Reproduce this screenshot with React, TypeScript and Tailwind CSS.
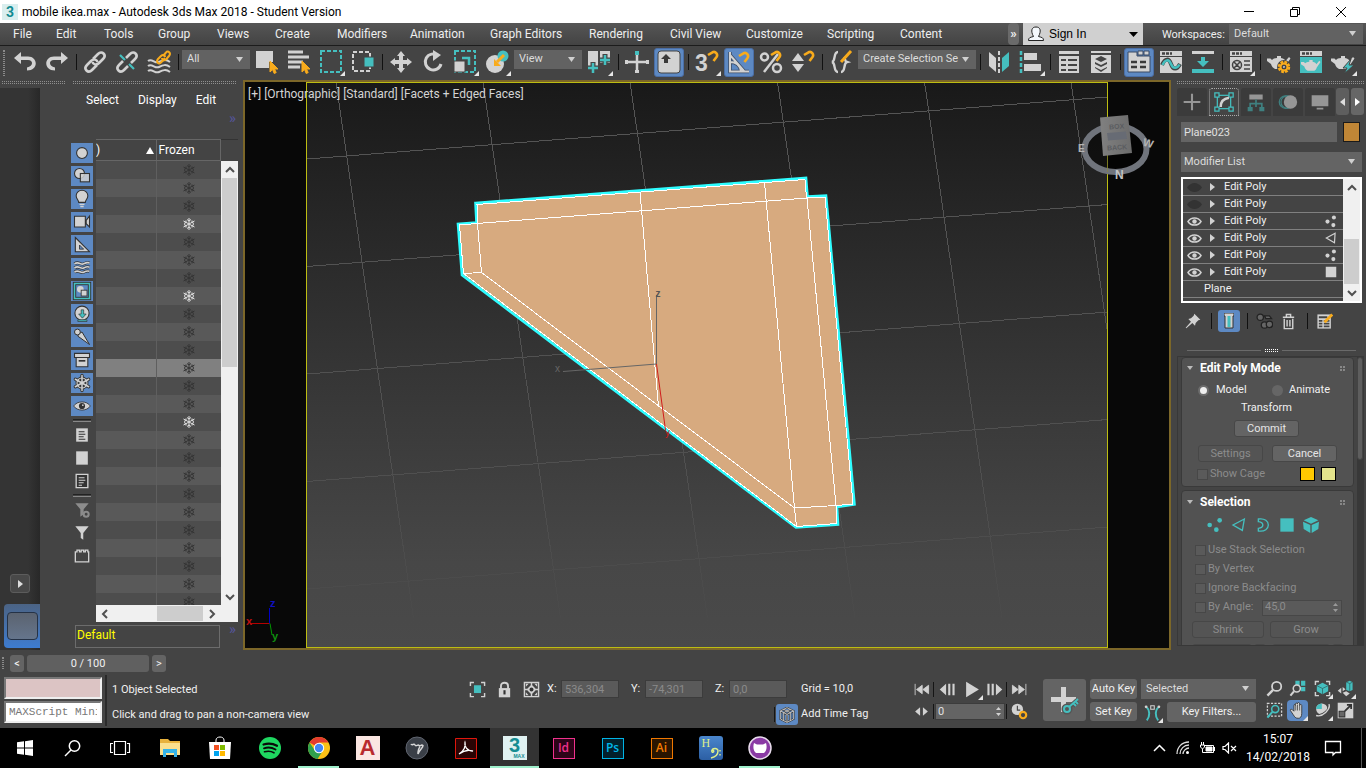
import React from "react";

const L = "#d2d2d2";
const T = "#45bfbf";
const O = "#f8ab1c";

type Kids = { children?: React.ReactNode };

function Ico({ children, s = 24, className = "" }: Kids & { s?: number; className?: string }) {
  return (
    <svg width={s} height={s} viewBox="0 0 24 24" fill="none" className={"shrink-0 " + className} aria-hidden="true">
      {children}
    </svg>
  );
}

function Corner() {
  return (
    <svg width="5" height="5" viewBox="0 0 5 5" className="absolute bottom-0 right-0" aria-hidden="true">
      <path d="M5 0V5H0Z" fill="#e6e6e6" />
    </svg>
  );
}

function Tool({ label, children, fly, on }: Kids & { label: string; fly?: boolean; on?: boolean }) {
  return (
    <button aria-label={label} className="flex h-8 w-8 shrink-0 items-center justify-center">
      <span
        className={
          on
            ? "relative flex h-[29px] w-[30px] items-center justify-center rounded-[3px] border border-[#4a6ea6] bg-[#5d89c3]"
            : "relative flex h-7 w-7 items-center justify-center"
        }
      >
        {children}
        {fly && <Corner />}
      </span>
    </button>
  );
}

const Sep = () => (
  <span className="flex h-8 w-1.5 shrink-0 items-center justify-center">
    <span className="h-4 w-px bg-[#111]" />
  </span>
);

function Drop({ label, value, className = "" }: { label: string; value: string; className?: string }) {
  return (
    <span className={"relative block shrink-0 bg-[#626262] " + className}>
      <select
        aria-label={label}
        className="block h-full w-full appearance-none overflow-hidden bg-transparent pl-[5px] pr-3 text-[11px] text-[#dcdcdc] outline-none"
      >
        <option>{value}</option>
      </select>
      <svg width="7" height="5" viewBox="0 0 7 5" className="pointer-events-none absolute right-[7px] top-1/2 -mt-[3px]" aria-hidden="true">
        <path d="M0 0H7L3.5 5Z" fill="#cfcfcf" />
      </svg>
    </span>
  );
}

const Magnet = ({ x = 12, y = 0 }: { x?: number; y?: number }) => (
  <g transform={`translate(${x} ${y})`} stroke={O} strokeWidth="2.6" fill="none">
    <path d="M0 5L4.500 2.300A3.200 3.200 0 0 1 8.500 7L5.500 11" />
  </g>
);

const Pointer = () => <path d="M15 11V22L17.600 19.600L19.200 23.500L21.200 22.600L19.500 19H23Z" fill={O} stroke={O} />;

const Teapot = () => (
  <path
    d="M10 6h4v2c3 .5 4 1.500 4.500 3L22 7l1.500 1.500L19 15c-.5 2-1.500 3-3 4H8c-2-1-3.500-3-4-5L0 11V8.500h3.500L5 10c1-1.300 2.500-1.800 5-2z"
    fill={L}
  />
);

const menus = ["File", "Edit", "Tools", "Group", "Views", "Create", "Modifiers", "Animation", "Graph Editors", "Rendering", "Civil View", "Customize", "Scripting", "Content"];

function TitleBar() {
  return (
    <header className="flex h-[23px] shrink-0 items-center bg-white text-black">
      <span className="ml-0.5 mr-1 flex h-4 w-4 items-center justify-center bg-[#d9eeee] text-[14px] font-bold leading-4 text-[#128a90]">3</span>
      <h1 className="text-[12px]">mobile ikea.max - Autodesk 3ds Max 2018 - Student Version</h1>
      <div className="ml-auto flex pr-0.5">
        <button aria-label="Minimize" className="flex h-5 w-[46px] items-center justify-center">
          <svg width="12" height="12" stroke="#000"><path d="M1 5.500H11" /></svg>
        </button>
        <button aria-label="Restore" className="flex h-5 w-[46px] items-center justify-center">
          <svg width="12" height="12" stroke="#000" fill="none"><path d="M1.500 3.500H8.500V10.500H1.500ZM3.500 3.500V1.500H10.500V8.500H8.500" /></svg>
        </button>
        <button aria-label="Close" className="flex h-5 w-[46px] items-center justify-center">
          <svg width="12" height="12" stroke="#000"><path d="M1 1L11 11M11 1L1 11" /></svg>
        </button>
      </div>
    </header>
  );
}

function MenuBar() {
  return (
    <div className="flex h-[23px] shrink-0 border-b border-[#1c1c1c] bg-gradient-to-b from-[#565656] to-[#434343] text-[12px] text-[#eeeeee]">
      <nav className="grid grid-cols-[43px_48px_54px_59px_58px_62px_73px_80px_99px_81px_76px_81px_73px_auto] items-center pl-[13px]">
        {menus.map((m) => (
          <button key={m} className="whitespace-nowrap text-left leading-[22px]">{m}</button>
        ))}
      </nav>
      <div className="ml-auto flex pr-[3px]">
        <button aria-label="More menus" className="mr-1 w-[11px] rounded bg-[#6a6a6a] text-[13px] font-bold leading-[18px]">»</button>
        <button className="mr-[19px] flex w-[120px] items-center bg-[#d0d0d0] font-['Liberation_Sans',sans-serif] text-[12px] text-black">
          <svg width="18" height="18" viewBox="0 0 18 18" className="ml-1 mr-1" fill="#f4f8fc" stroke="#222" aria-hidden="true">
            <path d="M1.500 15.500C1.500 12.500 3 12.500 6.500 11.500C3.500 6 4.500 2 9 2S14.500 6 11.500 11.500C15 12.500 16.500 12.500 16.500 15.500Z" />
          </svg>
          Sign In
          <svg width="9" height="5" className="ml-auto mr-[5px]" aria-hidden="true"><path d="M0 0H9L4.500 5Z" /></svg>
        </button>
        <span className="mr-[5px] w-[62px] whitespace-nowrap text-right text-[11px] leading-[23px]">Workspaces:</span>
        <Drop label="Workspaces" value="Default" className="mt-px h-5 w-[134px]" />
      </div>
    </div>
  );
}

function Toolbar() {
  return (
    <div className="flex h-[34px] shrink-0 overflow-hidden bg-[#444444]">
      <span className="my-1 ml-[3px] mr-1 w-0.5 shrink-0 border-x border-dotted border-[#8a8a8a]" />
      <Tool label="Undo"><Ico><path d="M8 2L1 8L8 14V10H15C21 10 20 17 14 17.500V20.500C26 20.500 25 6.500 15 6.500H8Z" fill={L} /></Ico></Tool>
      <Tool label="Redo"><Ico><path d="M16 2L23 8L16 14V10H9C3 10 4 17 10 17.500V20.500C-2 20.500 -1 6.500 9 6.500H16Z" fill={L} /></Ico></Tool>
      <Sep />
      <Tool label="Link">
        <Ico><g stroke={L} strokeWidth="2.600"><path d="M10 9L15 4C19 0 24 5 20 9L16 13C13 16 10 14 9.500 12" /><path d="M14 15L9 20C5 24 0 19 4 15L8 11C11 8 14 10 14.500 12" /></g></Ico>
      </Tool>
      <Tool label="Unlink">
        <Ico><g stroke={L} strokeWidth="2.600"><path d="M11 8L15 4C19 0 24 5 20 9L16 13" /><path d="M13 16L9 20C5 24 0 19 4 15L8 11" /></g><path d="M5 5L10 10M14 14L19 19" stroke={T} strokeWidth="2.200" /></Ico>
      </Tool>
      <Tool label="Bind to space warp">
        <Ico>
          <g stroke={L} strokeWidth="2"><path d="M1 11C5 8 8 14 12 12S19 9 23 12M1 16C5 13 8 19 12 17S19 14 23 17M1 21C5 18 8 24 12 22S19 19 23 22" /></g>
          <g stroke={O} strokeWidth="2"><path d="M16 6L19 2.500C21 0 24.500 3 22 6L19 9.500C17 11 15 10 15 8" /><path d="M18 8L14 12.500C12 15 8.500 12 11 9L14 6C16 4 18 5 18 7" /></g>
        </Ico>
      </Tool>
      <Sep />
      <Drop label="Selection filter" value="All" className="ml-px mr-px mt-1 h-[19px] w-[68px]" />
      <Tool label="Select object"><Ico><path d="M1 1H18V12H14V18H1Z" fill={L} /><Pointer /></Ico></Tool>
      <Tool label="Select by name"><Ico><path d="M1 2H16M1 7H22M1 12H16M1 17H13" stroke={L} strokeWidth="3" /><Pointer /></Ico></Tool>
      <Tool label="Selection region" fly><Ico><rect x="2" y="1" width="20" height="21" stroke={T} strokeWidth="2" strokeDasharray="4 2" /></Ico></Tool>
      <Tool label="Window crossing"><Ico><rect x="2" y="2" width="17" height="19" stroke={L} strokeWidth="2" strokeDasharray="4 2" /><rect x="13" y="7" width="10" height="10" fill={T} stroke="#444" /></Ico></Tool>
      <Sep />
      <Tool label="Move"><Ico><path d="M12 1L16 6H14V10H18V8L23 12L18 16V14H14V18H16L12 23L8 18H10V14H6V16L1 12L6 8V10H10V6H8Z" fill={L} /></Ico></Tool>
      <Tool label="Rotate"><Ico><path d="M17 5.500A8 8 0 1 0 20 14" stroke={L} strokeWidth="3" /><path d="M12 0V11L20 5Z" fill={L} /></Ico></Tool>
      <Tool label="Scale" fly><Ico><rect x="2" y="1" width="20" height="21" stroke={T} strokeWidth="2" strokeDasharray="4 2" /><rect x="1" y="11" width="11" height="11" fill={L} stroke="#444" /><path d="M9 8H16V15" stroke={T} strokeWidth="2.500" /></Ico></Tool>
      <Tool label="Place" fly><Ico><circle cx="10" cy="14" r="9" fill={L} /><circle cx="18" cy="6" r="5.500" fill={T} /><path d="M19 5L12 12" stroke={O} strokeWidth="3" /><path d="M9 16V9L16 16Z" fill={O} /></Ico></Tool>
      <Drop label="Reference coordinate system" value="View" className="ml-px mr-px mt-1 h-[19px] w-[68px]" />
      <Tool label="Pivot center" fly><Ico><path d="M1 1H11V16H1ZM13 1H23V13H13Z" fill={L} /><path d="M6 12V24M1 18H12M18 4V17M12 10H24" stroke="#444" strokeWidth="5" /><path d="M6 13V23M1 18H11M18 5V15M13 10H23" stroke={T} strokeWidth="2.500" /></Ico></Tool>
      <Sep />
      <Tool label="Manipulate"><Ico><path d="M12 5V23M1 12H23" stroke={L} strokeWidth="2.500" /><path d="M10 1H14V5H10Z" fill={T} /><path d="M0 10H3V14H0ZM21 10H24V14H21ZM10 20H14V23H10Z" fill={L} /></Ico></Tool>
      <Tool label="Keyboard shortcut override" on><Ico><rect x="1" y="1" width="22" height="22" rx="3" fill={L} stroke="#444" /><path d="M9 4L14 9H11V13H7V9H4Z" fill="#3a3a3a" /></Ico></Tool>
      <Sep />
      <Tool label="3D snap" fly><span className="absolute left-0.5 top-0.5 font-['Liberation_Sans'] text-[23px] font-bold leading-[26px] text-[#d2d2d2]">3</span><Ico><Magnet x={13} /></Ico></Tool>
      <Tool label="Angle snap" on><Ico><path d="M3 2V21.500H22M3 12C10 12 13 16 14 21M3 5L17 21" stroke="#3c4c66" strokeWidth="3.500" /><path d="M3 2V21.500H22M3 12C10 12 13 16 14 21M3 5L17 21" stroke={L} strokeWidth="2" /><Magnet x={12} y={1} /></Ico></Tool>
      <Tool label="Percent snap"><Ico><circle cx="5.500" cy="7" r="3.500" stroke={L} strokeWidth="2.500" /><circle cx="18" cy="18" r="4" stroke={L} strokeWidth="2.500" /><path d="M19 4L5 22" stroke={L} strokeWidth="2.500" /><Magnet x={12} /></Ico></Tool>
      <Tool label="Spinner snap"><Ico><path d="M7 3L13 11H1ZM7 22L13 14H1Z" fill={L} /><Magnet x={13} /></Ico></Tool>
      <Sep />
      <Tool label="Edit named selection sets"><Ico><path d="M9 2C4 2 7 11 3 12C7 13 4 22 9 22M12 22C17 22 14 13 18 12C15 11 17 9 15 7" stroke={L} strokeWidth="2.400" /><path d="M22 1L12 12" stroke={O} strokeWidth="3" /></Ico></Tool>
      <Drop label="Named selection sets" value="Create Selection Se" className="ml-px mr-px mt-1 h-[19px] w-[118px]" />
      <Sep />
      <Tool label="Mirror"><Ico><path d="M2 2L9 8V22L2 16Z" fill={L} /><path d="M12 1V23" stroke={L} strokeWidth="2" strokeDasharray="4 2" /><path d="M22 2L15 8V22L22 16Z" fill={T} /></Ico></Tool>
      <Tool label="Align" fly><Ico><path d="M2 1V23" stroke={T} strokeWidth="2.500" strokeDasharray="4 2" /><path d="M5 3H18V10H5ZM5 14H22V21H5Z" fill={L} /></Ico></Tool>
      <Sep />
      <Tool label="Scene explorer"><Ico><rect x="2" y="1" width="20" height="22" fill={L} /><path d="M2 5H22" stroke="#444" strokeWidth="2" /><path d="M4 10H9M11 10H20M4 15H9M11 15H20M4 20H9M11 20H20" stroke="#444" strokeWidth="2" /></Ico></Tool>
      <Tool label="Layer explorer"><Ico><rect x="2" y="1" width="20" height="22" fill={L} /><path d="M2 4H22" stroke="#444" strokeWidth="2" /><path d="M12 6L18 9L12 12L6 9ZM6 12L12 15L18 12V14L12 17L6 14ZM6 17L12 20L18 17V18L12 22L6 18Z" fill="#444" /></Ico></Tool>
      <Sep />
      <Tool label="Ribbon" on><Ico><path d="M1 2H10V6H23V22H1Z" fill={L} stroke="#3a4a64" /><path d="M11 1H16V5H11ZM17 1H22V5H17Z" fill={L} stroke="#3a4a64" /><path d="M4 12H10M13 12H19M4 17H10M13 17H19" stroke="#3a3a3a" strokeWidth="2.500" /></Ico></Tool>
      <Tool label="Curve editor"><Ico><path d="M1 1H23V6H1ZM1 7H23V23H1Z" fill={L} /><path d="M3 3.500H13" stroke="#444" strokeWidth="2.500" strokeDasharray="3 1" /><path d="M3 15C6 8 10 8 12 14S18 20 21 14" stroke="#444" strokeWidth="4" /><path d="M3.500 15C6 9 10 9 12 14S18 19 20.500 14.500" stroke={T} strokeWidth="2.500" /></Ico></Tool>
      <Tool label="Schematic view"><Ico><path d="M1 1H23V4H1Z" fill={L} /><path d="M10 7H14V11H18L12 17L6 11H10ZM1 19H23V23H1Z" fill={T} /></Ico></Tool>
      <Sep />
      <Tool label="Material editor" fly><Ico><path d="M1 1H23V6H1ZM1 7H23V22H1Z" fill={L} /><path d="M3 3.500H13" stroke="#444" strokeWidth="2.500" strokeDasharray="3 1" /><circle cx="8" cy="15" r="4.500" stroke="#444" strokeWidth="1.500" /><path d="M5 12L11 18M11 12L5 18M15 11H21M15 15H21M15 19H21" stroke="#444" strokeWidth="1.500" /></Ico></Tool>
      <Sep />
      <Tool label="Render setup"><Ico><Teapot /><circle cx="17" cy="17" r="4" stroke="#444" strokeWidth="6" /><circle cx="17" cy="17" r="4.500" stroke={O} strokeWidth="3.500" strokeDasharray="2.400 1.100" /><circle cx="17" cy="17" r="3.500" stroke={O} strokeWidth="2" /></Ico></Tool>
      <Tool label="Rendered frame window"><Ico><path d="M1 1H23V6H1Z" fill={L} /><path d="M3 3.500H13" stroke="#444" strokeWidth="2.500" strokeDasharray="3 1" /><path d="M1 7H23V23H1Z" fill={T} /><g transform="translate(2 5) scale(.83)"><Teapot /></g></Ico></Tool>
      <Tool label="Render production" fly><Ico><Teapot /><path d="M20 9L12 18H16L13 24L23 15H18Z" fill={T} stroke="#444" /></Ico></Tool>
    </div>
  );
}

/* ---------- Scene explorer ---------- */

const K = "#333";
const filterIcons: [string, React.ReactNode][] = [
  ["Geometry", <circle cx="12" cy="12" r="6.500" fill={L} stroke={K} strokeWidth="1.300" />],
  ["Shapes", <><circle cx="9" cy="9" r="6" fill={L} stroke={K} strokeWidth="1.300" /><rect x="10" y="9" width="11" height="10" fill={L} fillOpacity=".85" stroke={K} strokeWidth="1.300" /></>],
  ["Lights", <><path d="M8 16C8 13 5 12 5 8A7 6.500 0 0 1 19 8C19 12 16 13 16 16Z" fill={L} stroke={K} strokeWidth="1.300" /><path d="M9 18.500H15M10 21H14" stroke={L} strokeWidth="1.600" /></>],
  ["Cameras", <path d="M3 5H16V18H3ZM17 10L21 5V18L17 14Z" fill={L} stroke={K} strokeWidth="1.300" />],
  ["Helpers", <><path d="M4 3L21 20H4Z" fill={L} stroke={K} strokeWidth="1.300" /><path d="M9 12L14 17H9Z" fill="#5d89c3" stroke={K} /></>],
  ["Space warps", <g strokeWidth="2"><path d="M3 7C8 3 10 9 14 7S19 5 21 6M3 12C8 8 10 14 14 12S19 10 21 11M3 17C8 13 10 19 14 17S19 15 21 16" stroke={K} strokeWidth="3.600" /><path d="M3 7C8 3 10 9 14 7S19 5 21 6M3 12C8 8 10 14 14 12S19 10 21 11M3 17C8 13 10 19 14 17S19 15 21 16" stroke={L} /></g>],
  ["Groups", <><rect x="3" y="3" width="18" height="18" fill="#5d89c3" stroke={K} strokeWidth="4" /><rect x="3" y="3" width="18" height="18" stroke={T} strokeWidth="1.800" /><circle cx="10" cy="10" r="4" fill={L} /><rect x="11" y="11" width="7" height="7" fill={L} stroke={K} /></>],
  ["Object references", <><circle cx="12" cy="11" r="8.500" fill={L} stroke={K} strokeWidth="1.300" /><path d="M11 7H14V12H17L12.500 17L8 12H11ZM7 19H18V21H7Z" fill={T} stroke={K} strokeWidth=".8" /></>],
  ["Bones", <><path d="M8 8L12 6L21 21L7 11Z" fill={L} stroke={K} strokeWidth="1.200" /><circle cx="6.500" cy="6" r="3.500" fill={L} stroke={K} strokeWidth="1.200" /></>],
  ["Containers", <><path d="M5 9H19V20H5ZM3 4H21V9H3Z" fill={L} stroke={K} strokeWidth="1.300" /><path d="M8 13H16" stroke={K} strokeWidth="2" /></>],
  ["Frozen objects", <g strokeLinecap="round"><path d="M12 3V21M4 7.500L20 16.500M20 7.500L4 16.500" stroke={K} strokeWidth="4" /><circle cx="12" cy="12" r="6" stroke={K} strokeWidth="3.500" /><path d="M12 3V21M4 7.500L20 16.500M20 7.500L4 16.500" stroke={L} strokeWidth="1.800" /><circle cx="12" cy="12" r="6" stroke={L} strokeWidth="1.300" /></g>],
  ["Hidden objects", <><path d="M2 12C6 5.500 18 5.500 22 12C18 18.500 6 18.500 2 12Z" fill={L} stroke={K} /><circle cx="12" cy="12" r="3.700" fill={K} /><circle cx="13" cy="11" r="1" fill={L} /></>],
];
const plainIcons: [string, React.ReactNode][] = [
  ["Display all", <><path d="M5 4H19V20H5Z" fill={L} /><path d="M8 8H15M8 11H16M8 14H14M8 17H16" stroke={K} strokeWidth="1.300" /></>],
  ["Display none", <path d="M5 4H19V20H5Z" fill={L} />],
  ["Invert display", <><path d="M5 4H19V20H5Z" fill="#333" stroke={L} strokeWidth="1.600" /><path d="M8 8H15M8 11H16M8 14H14M8 17H12" stroke={L} strokeWidth="1.300" /></>],
];
const funnelIcons: [string, React.ReactNode][] = [
  ["Filter settings", <><path d="M4 4H20L14 11V17L10 20V11Z" fill="#8c8c8c" /><circle cx="17" cy="17" r="3" stroke="#8c8c8c" strokeWidth="2.500" fill="#444" /></>],
  ["Filter", <path d="M4 4H20L13.500 12V20L10.500 18V12Z" fill={L} />],
  ["Layers", <path d="M4 7H6V5H9V7H11V5H14V7H16V5H19V7H20V19H4Z" stroke={L} strokeWidth="1.600" />],
];

function Flake({ color }: { color: string }) {
  return (
    <svg width="12" height="12" viewBox="0 0 12 12" stroke={color} strokeWidth="1" fill="none" className="mx-auto" aria-hidden="true">
      <path d="M6 0V12M.5 3L11.500 9M11.500 3L.5 9M4 1.500L6 3L8 1.500M4 10.500L6 9L8 10.500M1 5.500L3 4.500V2.500M11 5.500L9 4.500V2.500M1 6.500L3 7.500V9.500M11 6.500L9 7.500V9.500" />
    </svg>
  );
}

const Chevron = ({ d }: { d: string }) => (
  <svg width="10" height="10" viewBox="0 0 10 10" fill="none" stroke="#505050" strokeWidth="2" aria-hidden="true"><path d={d} /></svg>
);
const UP = "M1 7L5 3L9 7", DOWN = "M1 3L5 7L9 3", LEFT = "M7 1L3 5L7 9", RIGHT = "M3 1L7 5L3 9";

const Grip = ({ className = "" }: { className?: string }) => (
  <span className={"block h-[3px] border-y border-dotted border-[#8e8e8e] " + className} />
);

function Explorer() {
  return (
    <aside className="flex w-[243px] shrink-0 flex-col bg-[#444444]">
      <div className="flex h-2 shrink-0 gap-2 pl-0.5 pr-[7px] pt-px">
        <Grip className="w-[63px]" />
        <Grip className="flex-1" />
      </div>
      <div className="flex min-h-0 flex-1">
        <div className="flex w-10 shrink-0 flex-col justify-end bg-gradient-to-r from-[#343434] from-70% to-[#282828] pb-0.5">
          <button aria-label="Expand" className="mb-[11px] ml-2.5 flex h-[19px] w-5 items-center justify-center rounded-[3px] border border-[#5c5c5c] bg-[#484848]">
            <svg width="5" height="8"><path d="M0 0L5 4L0 8Z" fill="#ddd" /></svg>
          </button>
          <div className="ml-1 h-11 rounded-l bg-gradient-to-b from-[#4b6384] to-[#3d7cd0] p-[3px] pr-0 pt-2">
            <div className="h-7 w-[31px] rounded-sm border border-[#253246] bg-gradient-to-b from-[#5b6370] to-[#65758c]" />
          </div>
        </div>
        <div className="flex min-w-0 flex-1 flex-col">
          <nav className="flex h-6 shrink-0 items-center gap-[19px] pl-[46px] text-[12px] text-white">
            <button>Select</button>
            <button>Display</button>
            <button>Edit</button>
          </nav>
          <div className="mb-[13px] h-3.5 shrink-0 pr-[7px] text-right text-[15px] leading-[13px] text-[#55559a]">»</div>
          <div className="flex min-h-0 flex-1">
            <div className="ml-[31px] flex w-[22px] shrink-0 flex-col gap-[3px] pt-1">
              {filterIcons.map(([n, i]) => (
                <button key={n} aria-label={n} className="flex h-5 w-[22px] shrink-0 items-center justify-center bg-[#5d89c3]"><Ico s={20}>{i}</Ico></button>
              ))}
              <span className="mx-0.5 h-[3px] border-y border-b-[#888] border-t-[#222]" />
              {plainIcons.map(([n, i]) => (
                <button key={n} aria-label={n} className="flex h-5 items-center justify-center"><Ico s={20}>{i}</Ico></button>
              ))}
              <span className="mx-0.5 h-[3px] border-y border-b-[#888] border-t-[#222]" />
              {funnelIcons.map(([n, i]) => (
                <button key={n} aria-label={n} className="flex h-5 items-center justify-center"><Ico s={20}>{i}</Ico></button>
              ))}
            </div>
            <div className="ml-[3px] mr-[5px] flex min-w-0 flex-1 flex-col">
              <div className="flex min-h-0 flex-1">
                <div className="min-w-0 flex-1 overflow-hidden">
                  <table className="w-full table-fixed border-collapse text-[12px] leading-[18px] text-white">
                    <thead>
                      <tr className="h-[21px]">
                        <th className="w-[60px] border border-l-0 border-[#666] p-0 text-left font-normal">
                          <span className="flex items-center justify-between pr-0.5"><span>)</span><svg width="8" height="7"><path d="M4 0L8 7H0Z" fill="#fff" /></svg></span>
                        </th>
                        <th className="border border-[#666] p-0 pl-0.5 text-left font-normal">Frozen</th>
                      </tr>
                    </thead>
                    <tbody>
                      {Array.from({ length: 25 }, (_, i) => (
                        <tr key={i} className={"h-[18px] " + (i === 11 ? "bg-[#808080]" : i % 2 ? "bg-[#595959]" : "bg-[#4d4d4d]")}>
                          <td className="border-r border-[#5f5f5f] p-0" />
                          <td className="p-0"><Flake color={[3, 7, 14].includes(i) ? "#e2e2e2" : "#343434"} /></td>
                        </tr>
                      ))}
                    </tbody>
                  </table>
                </div>
                <div className="flex w-[17px] shrink-0 flex-col border-t border-[#333] pt-[21px]">
                  <div className="flex flex-1 flex-col items-center bg-[#f0f0f0]">
                    <span className="flex h-[17px] items-center"><Chevron d={UP} /></span>
                    <span className="w-[15px] flex-[189] bg-[#cdcdcd]" />
                    <span className="flex-[221]" />
                    <span className="flex h-[17px] items-center"><Chevron d={DOWN} /></span>
                  </div>
                </div>
              </div>
              <div className="flex h-[17px] shrink-0 items-center bg-[#f0f0f0] pr-[17px]">
                <span className="flex w-[17px] justify-center"><Chevron d={LEFT} /></span>
                <span className="ml-[44px] h-[15px] w-[46px] bg-[#cdcdcd]" />
                <span className="flex w-[18px] justify-center"><Chevron d={RIGHT} /></span>
              </div>
            </div>
          </div>
          <div className="flex h-7 shrink-0 pl-[35px] pt-[3px]">
            <input aria-label="Workspace name" defaultValue="Default" className="h-[23px] w-[145px] border border-[#6c6c6c] bg-transparent px-px pb-1 text-[12px] text-[#ffff00] outline-none" />
            <span className="ml-auto pr-[7px] text-[15px] leading-[8px] text-[#55559a]">»</span>
          </div>
        </div>
      </div>
    </aside>
  );
}

/* ---------- Viewport ---------- */

function Viewport() {
  return (
    <main className="relative min-w-0 flex-1 border-2 border-[#7c6729] bg-[#080808]">
      <svg className="h-full w-full" viewBox="245 82 924 566" preserveAspectRatio="xMidYMid slice" fill="none" aria-hidden="true">
        <defs>
          <linearGradient id="bg" x1="0" y1="0" x2="0" y2="1">
            <stop offset="0" stopColor="#191919" />
            <stop offset=".5" stopColor="#353535" />
            <stop offset=".85" stopColor="#474747" />
            <stop offset="1" stopColor="#4a4a4a" />
          </linearGradient>
          <linearGradient id="gridfade" gradientUnits="userSpaceOnUse" x1="0" y1="82" x2="0" y2="618">
            <stop offset="0" stopColor="#555" />
            <stop offset=".7" stopColor="#505050" />
            <stop offset="1" stopColor="#4a4a4a" />
          </linearGradient>
          <linearGradient id="cube" x1="0" y1="0" x2="1" y2="0">
            <stop offset="0" stopColor="#808080" />
            <stop offset="1" stopColor="#6c6c6c" />
          </linearGradient>
          <clipPath id="safe"><rect x="307" y="82" width="801" height="566" /></clipPath>
        </defs>
        <rect x="307" y="82" width="801" height="566" fill="url(#bg)" />
        <g clipPath="url(#safe)" stroke="url(#gridfade)" shapeRendering="crispEdges">
          <path d="M336 82L413.500 618M483 82L560.500 618M630 82L707.500 618M777.500 82L855 618M924.500 82L1002 618M1071 82L1149 618" />
          <path d="M307 159L1108 97M307 266.500L1108 204.500M307 374L1108 312M307 481.500L1108 419.500M307 589L1108 527" />
        </g>
        <rect x="306.500" y="82.500" width="801" height="565" stroke="#bdbd12" />
        <path d="M475.500 203L806 178L807.500 196.500L826 195.500L854.500 504.500L837 507L838 524.500L796 527.500L462 275L458 224L476.500 222.500Z" fill="#d7aa7f" stroke="#2ffcff" strokeWidth="2.600" />
        <g stroke="#fff" shapeRendering="crispEdges">
          <path d="M477 204.500L805 179.500L806.500 198L825 197L853 504L836 505.500L837 523.500L796.500 526.500L463.500 273.500L459.500 225L477.500 223.500Z" />
          <path d="M477 223.500L807 198M477.500 223.500L481.500 272.500H482L463.500 273.500M481.500 272.500L794.500 508L836 505.500M640 192L658.500 407M764.500 182.500L794.500 508L796.500 527M807 198L836 505.500" />
        </g>
        <path d="M656.500 295V364L563 371.500" stroke="#666" />
        <path d="M656.500 364L665.500 430" stroke="#d01c1c" />
        <g fontFamily="Liberation Sans, sans-serif" fontSize="10">
          <text x="555" y="372" fill="#666">x</text>
          <text x="655.500" y="297" fill="#555" fontWeight="bold">z</text>
          <text x="665" y="436" fill="#d01c1c">y</text>
        </g>
        <g fontFamily="Liberation Sans, sans-serif" fontSize="11" fontWeight="bold">
          <path d="M269.500 623.500H251" stroke="#b40000" />
          <path d="M269.500 623.500V608" stroke="#0000c8" />
          <path d="M270 623.500L272 635" stroke="#009600" />
          <text x="246" y="625" fill="#c01010">x</text>
          <text x="270" y="607" fill="#1010c0">z</text>
          <text x="272" y="640" fill="#109010">y</text>
        </g>
        <ellipse cx="1115.500" cy="149" rx="31" ry="23" fill="#000" fillOpacity=".5" stroke="#70747c" strokeWidth="6" />
        <path d="M1107.500 125V172" stroke="#8c8c30" strokeOpacity=".6" />
        <path d="M1100 117.500L1128 115L1132 153L1103 156Z" fill="url(#cube)" />
        <path d="M1107 133L1126 131.500L1127 139L1108 140.500Z" fill="#676b74" />
        <g fontFamily="Liberation Sans, sans-serif" fontWeight="bold">
          <text x="1109" y="129" fontSize="7" fill="#5a5c60" transform="rotate(-4 1115 127)">BOX</text>
          <text x="1107" y="150" fontSize="7" fill="#5a5c60" transform="rotate(-4 1115 148)">BACK</text>
          <text x="1078" y="152" fontSize="10" fill="#b4b4b4">E</text>
          <text x="1115" y="179" fontSize="12" fill="#c4c4c4">N</text>
          <text x="1143" y="147" fontSize="11" fill="#b4b4b4" transform="rotate(15 1148 143)">W</text>
        </g>
      </svg>
      <div className="absolute left-[3px] top-1 flex gap-[3px] text-[12px] leading-[17px] text-[#d4d4d4]">
        <button>[+]</button><button>[Orthographic]</button><button>[Standard]</button><button>[Facets + Edged Faces]</button>
      </div>
    </main>
  );
}

/* ---------- Command panel ---------- */

const marks: Record<string, React.ReactNode> = {
  vertex: <g fill={L}><circle cx="6" cy="13" r="3.500" /><circle cx="17" cy="6" r="3.500" /><circle cx="16" cy="19" r="3.500" /></g>,
  edge: <path d="M19 4L4 12L18 20Z" stroke={L} strokeWidth="2" />,
  face: <path d="M3 3H21V21H3Z" fill={L} />,
};
const stack: { on: boolean; mark?: string }[] = [{ on: false }, { on: false }, { on: true, mark: "vertex" }, { on: true, mark: "edge" }, { on: true, mark: "vertex" }, { on: true, mark: "face" }];

const Tick = ({ label, h = "h-[19px]" }: { label: string; h?: string }) => (
  <label className={"flex items-center gap-0.5 text-[#8c8c8c] " + h}>
    <input type="checkbox" disabled className="h-[11px] w-[11px] appearance-none border border-[#474747] bg-[#5a5a5a]" />
    {label}
  </label>
);

const PBtn = ({ children, off, label, className = "" }: Kids & { off?: boolean; label?: string; className?: string }) => (
  <button disabled={off} aria-label={label} className={"h-[17px] rounded-[3px] border border-[#474747] leading-[15px] " + (off ? "bg-[#545454] text-[#8c8c8c] " : "bg-[#646464] text-[#e6e6e6] ") + className}>
    {children}
  </button>
);

function RollHead({ title, className }: { title: string; className: string }) {
  return (
    <div className={"flex items-center pl-[5px] pr-2 " + className}>
      <svg width="6" height="4"><path d="M0 0H6L3 4Z" fill="#bbb" /></svg>
      <h2 className="ml-[7px] text-[12px] font-bold text-white">{title}</h2>
      <span className="ml-auto h-[5px] w-[5px] border-2 border-dotted border-[#888]" />
    </div>
  );
}

function Tab({ label, on, children }: Kids & { label: string; on?: boolean }) {
  return (
    <button aria-label={label} className={"flex h-7 w-[30px] shrink-0 items-center justify-center rounded-t-[3px] " + (on ? "border border-dotted border-[#aaa] bg-[#444]" : "bg-[#3b3b3b]")}>
      <Ico s={20}>{children}</Ico>
    </button>
  );
}

function CommandPanel() {
  return (
    <aside className="flex w-[195px] shrink-0 flex-col bg-[#444444] text-[11px] text-[#f0f0f0]">
      <div className="h-2 shrink-0 pl-1.5 pr-0.5 pt-px"><Grip /></div>
      <div className="flex shrink-0 gap-0.5 pl-1.5">
        <Tab label="Create"><path d="M12 2V22M2 12H22" stroke="#969696" strokeWidth="2.500" /></Tab>
        <Tab label="Modify" on><rect x="4" y="4" width="16" height="16" stroke={T} strokeWidth="1.500" /><path d="M1 1H6V6H1ZM18 1H23V6H18ZM1 18H6V23H1ZM18 18H23V23H18Z" fill="#444" stroke={T} strokeWidth="1.500" /><path d="M8 18C8 12 11 8 18 7" stroke={L} strokeWidth="3" /></Tab>
        <Tab label="Hierarchy"><path d="M4 3H20V9H4Z" fill="#969696" /><path d="M12 9V18M5 18V14H19V18" stroke="#3f8080" strokeWidth="2" /><path d="M2 18H8V23H2ZM16 18H22V23H16Z" fill="#3f8080" /></Tab>
        <Tab label="Motion"><circle cx="9" cy="12" r="7.500" stroke="#3f8080" strokeWidth="1.500" /><circle cx="11" cy="12" r="7.500" stroke="#3f8080" strokeWidth="1.500" /><circle cx="15" cy="12" r="8" fill="#969696" /></Tab>
        <Tab label="Display"><path d="M2 4H22V17H2ZM8 19H16V21H8Z" fill="#969696" /></Tab>
        <button aria-label="Previous tab" className="-ml-px flex h-[27px] w-[13px] shrink-0 items-center justify-center rounded-[3px] bg-[#5e5e5e]"><svg width="5" height="8"><path d="M5 0V8L0 4Z" fill="#ddd" /></svg></button>
        <button aria-label="Next tab" className="flex h-[27px] w-[13px] shrink-0 items-center justify-center rounded-[3px] bg-[#666]"><svg width="5" height="8"><path d="M0 0V8L5 4Z" fill="#fff" /></svg></button>
      </div>
      <div className="mt-1.5 flex shrink-0 pl-2.5">
        <input aria-label="Object name" defaultValue="Plane023" className="h-5 w-[156px] bg-[#646464] pl-[3px] text-[#e0e0e0] outline-none" />
        <button aria-label="Object color" className="ml-1.5 h-5 w-[17px] border border-[#1a1a1a] bg-[#c08636]" />
      </div>
      <div className="mt-2.5 shrink-0 pl-2.5 pr-1">
        <span className="relative block h-5 bg-[#646464]">
          <select aria-label="Modifier list" className="block h-full w-full appearance-none bg-transparent pl-[3px] text-[11px] text-[#dcdcdc] outline-none"><option>Modifier List</option></select>
          <svg width="7" height="5" className="pointer-events-none absolute right-[7px] top-[7px]"><path d="M0 0H7L3.500 5Z" fill="#cfcfcf" /></svg>
        </span>
      </div>
      <div className="ml-2.5 mr-1 mt-[5px] flex h-[126px] shrink-0 border-2 border-white">
        <ul className="min-w-0 flex-1">
          {stack.map((r, i) => (
            <li key={i} className="flex h-[17px] items-center border-b border-[#808080] pr-[5px]">
              <svg width="15" height="11" viewBox="0 0 15 11" className="ml-1 mr-1.5" aria-hidden="true">
                {r.on ? (
                  <><path d="M1 5.500C4 .8 11 .8 14 5.500C11 10.200 4 10.200 1 5.500Z" fill="none" stroke={L} strokeWidth="1.500" /><circle cx="7.500" cy="5.500" r="2.200" fill={L} /></>
                ) : (
                  <path d="M0 5.500C4 -.5 11 -.5 15 5.500C11 11.500 4 11.500 0 5.500Z" fill="#333" />
                )}
              </svg>
              <svg width="5" height="8" className="ml-0.5"><path d="M0 0L5 4L0 8Z" fill={L} /></svg>
              <span className="ml-[9px] flex-1">Edit Poly</span>
              {r.mark && <Ico s={14}>{marks[r.mark]}</Ico>}
            </li>
          ))}
          <li className="flex h-[17px] items-center border-b border-[#808080] pl-[21px]">Plane</li>
        </ul>
        <div className="flex w-[17px] flex-col items-center bg-[#f0f0f0]">
          <span className="flex h-[17px] items-center"><Chevron d={UP} /></span>
          <span className="flex-1" />
          <span className="h-[45px] w-[15px] bg-[#cdcdcd]" />
          <span className="flex h-[17px] items-center"><Chevron d={DOWN} /></span>
        </div>
      </div>
      <div className="mt-[7px] flex h-[22px] shrink-0 items-center pl-3">
        <button aria-label="Pin stack" className="flex w-5 justify-center"><Ico s={16}><path d="M14 1L23 10L20 11L16 15L15 19L11 15L2 23L1 22L9 13L5 9L9 8L13 4Z" fill={L} /></Ico></button>
        <span className="ml-2 h-4 w-px bg-[#111]" />
        <button aria-label="Show end result" className="ml-1.5 flex h-[22px] w-[22px] items-center justify-center rounded-[3px] bg-[#5d89c3]"><svg width="10" height="16"><path d="M0 0H10V3H9V15H1V3H0Z" fill={L} stroke="#333" /><path d="M3.500 3H6.500V14H3.500Z" fill={T} /></svg></button>
        <span className="ml-[7px] h-4 w-px bg-[#111]" />
        <button aria-label="Make unique" className="ml-1.5 flex w-5 justify-center"><Ico s={17}><g stroke="#222" strokeWidth="1.800" fill="#666"><circle cx="6" cy="6" r="4.500" /><path d="M12 4H19L22 8H14Z" /><circle cx="12" cy="17" r="4.500" /><circle cx="19" cy="16" r="4.500" /></g></Ico></button>
        <button aria-label="Remove modifier" className="ml-1 flex w-5 justify-center"><Ico s={17}><path d="M4 6H20M9 5V2H15V5M6 8V22H18V8M10 10V19M14 10V19" stroke={L} strokeWidth="2" /></Ico></button>
        <span className="ml-[9px] h-4 w-px bg-[#111]" />
        <button aria-label="Configure modifier sets" className="ml-1.5 flex w-5 justify-center"><Ico s={17}><path d="M2 2H21V22H2Z" fill={L} /><path d="M4 6H16M4 11H9M11 11H19M4 15H9M11 15H19M4 19H9M11 19H19" stroke="#444" strokeWidth="2.500" /><path d="M23 2L12 13" stroke={O} strokeWidth="4" /></Ico></button>
      </div>
      <div className="mt-4 flex h-1 shrink-0 items-center pl-4 pr-2.5">
        <span className="h-px flex-1 bg-[#6a6a6a]" /><Grip className="mx-1 w-[13px] !border-white" /><span className="h-px flex-1 bg-[#6a6a6a]" />
      </div>
      <div className="mb-1 ml-1.5 mr-0.5 mt-1 flex min-h-0 flex-1 gap-[3px] overflow-hidden border border-[#383838] pl-[3px]">
        <div className="flex w-[173px] shrink-0 flex-col gap-[3px] overflow-hidden">
          <section className="shrink-0 rounded-sm border border-[#3a3a3a] bg-[#525252]">
            <RollHead title="Edit Poly Mode" className="h-5" />
            <div className="flex h-6 items-center pl-4">
              <label className="flex w-[74px] items-center gap-[7px]"><input type="radio" name="mode" defaultChecked className="h-[11px] w-[11px] appearance-none rounded-full border-2 border-[#6c6c6c] bg-[#eee]" />Model</label>
              <label className="flex items-center gap-1.5"><input type="radio" name="mode" className="h-[11px] w-[11px] appearance-none rounded-full bg-[#666]" />Animate</label>
            </div>
            <div className="h-3 pr-0.5 text-center leading-3">Transform</div>
            <div className="mt-1.5 flex justify-center pr-0.5"><PBtn className="w-[65px]">Commit</PBtn></div>
            <div className="mt-2 flex gap-[9px] pl-4"><PBtn off className="w-[65px]">Settings</PBtn><PBtn className="w-[65px]">Cancel</PBtn></div>
            <div className="flex items-center pl-[15px] pr-[17px]">
              <Tick label="Show Cage" h="h-6" />
              <button aria-label="Cage color" className="ml-auto h-3.5 w-[15px] border border-black bg-[#ffc800]" />
              <button aria-label="Selected cage color" className="ml-1.5 h-3.5 w-[15px] border border-black bg-[#e4e48c]" />
            </div>
          </section>
          <section className="shrink-0 rounded-sm border border-[#3a3a3a] bg-[#525252]">
            <RollHead title="Selection" className="h-[22px]" />
            <div className="flex h-6 items-center gap-2 pl-[25px]">
              <button aria-label="Vertex"><Ico s={16}><g fill={T}><circle cx="4" cy="12" r="3.500" /><circle cx="19" cy="5" r="3.500" /><circle cx="14" cy="19" r="3.500" /></g></Ico></button>
              <button aria-label="Edge"><Ico s={16}><path d="M20 3L3 12L17 20Z" stroke={T} strokeWidth="2" /></Ico></button>
              <button aria-label="Border"><Ico s={16}><path d="M5 3C25 0 25 24 5 21V17C14 16 14 8 5 7Z" stroke={T} strokeWidth="2" /></Ico></button>
              <button aria-label="Polygon"><Ico s={16}><path d="M2 2H22V22H2Z" fill={T} /></Ico></button>
              <button aria-label="Element"><Ico s={16}><path d="M12 0L23 5L12 10L1 5ZM0 7L11 12V24L1 18ZM24 7L13 12V24L23 18Z" fill={T} /></Ico></button>
            </div>
            <div className="pl-[13px] pt-1">
              <Tick label="Use Stack Selection" />
              <Tick label="By Vertex" />
              <Tick label="Ignore Backfacing" />
              <div className="flex items-center">
                <Tick label="By Angle:" />
                <span className="relative ml-auto mr-[11px] block h-4 w-20">
                  <input aria-label="Angle" defaultValue="45,0" disabled className="block h-4 w-20 border border-[#474747] bg-[#5a5a5a] pl-0.5 text-[#8c8c8c]" />
                  <svg width="5" height="9" className="absolute right-1 top-[3px]"><path d="M2.500 0L5 3H0ZM2.500 9L5 6H0Z" fill="#999" /></svg>
                </span>
              </div>
            </div>
            <div className="mt-1 flex gap-1.5 pl-2.5"><PBtn off className="w-[72px]">Shrink</PBtn><PBtn off className="w-[72px]">Grow</PBtn></div>
            <div className="mt-1.5 flex gap-0.5 pl-2.5"><PBtn off label="Ring" className="w-[60px]" /><PBtn off label="Ring step" className="mr-1 w-[12px]" /><PBtn off label="Loop" className="w-[58px]" /><PBtn off label="Loop step" className="w-[12px]" /></div>
          </section>
        </div>
        <div className="w-[6px] bg-[#383838]"><div className="h-[103px] rounded border border-[#444] bg-[#5e5e5e]" /></div>
      </div>
    </aside>
  );
}

/* ---------- Status bar ---------- */

function Coord({ axis, value }: { axis: string; value: string }) {
  return (
    <label className="flex w-[84px] items-center">
      <span className="w-3.5">{axis}:</span>
      <input defaultValue={value} disabled className="h-[18px] w-[58px] border border-[#3c3c3c] bg-[#5a5a5a] pl-[3px] text-[#8a8a8a]" />
    </label>
  );
}

function SB({ label, children, fly, on, className = "w-6" }: Kids & { label: string; fly?: boolean; on?: boolean; className?: string }) {
  return (
    <button aria-label={label} className={"relative flex h-[21px] items-center justify-center rounded-sm " + (on ? "bg-[#5d89c3] " : "") + className}>
      <Ico s={17}>{children}</Ico>
      {fly && <Corner />}
    </button>
  );
}

const VSep = () => <span className="h-[15px] w-px shrink-0 bg-[#151515]" />;

function StatusBar() {
  return (
    <div className="shrink-0 bg-[#444444] text-[11px] text-[#f0f0f0]">
      <div className="flex h-6 items-center gap-[3px] pt-0.5">
        <span className="ml-0.5 mr-[3px] h-3 w-0.5 border-x border-dotted border-[#8a8a8a]" />
        <button aria-label="Previous frame" className="h-[17px] w-3.5 rounded-[3px] bg-[#646464] leading-[15px]">&lt;</button>
        <button className="h-[17px] w-[122px] rounded-[3px] bg-[#606060] leading-[17px]">0 / 100</button>
        <button aria-label="Next frame" className="h-[17px] w-3.5 rounded-[3px] bg-[#646464] leading-[15px]">&gt;</button>
      </div>
      <div className="flex h-[54px]">
        <div className="ml-1 flex w-[98px] shrink-0 flex-col gap-0.5 pt-[3px]">
          <input aria-label="Macro recorder" className="h-[22px] border-2 border-[#777] border-b-[#eee] border-r-[#eee] bg-[#dcc4c4]" />
          <input aria-label="MAXScript Mini Listener" placeholder="MAXScript Mini Listener" className="h-[22px] border-2 border-[#777] border-b-[#eee] border-r-[#eee] bg-white pl-[3px] pr-[3px] font-['Liberation_Mono',monospace] text-[11px] placeholder:text-[#777]" />
        </div>
        <span className="ml-[3px] mt-px h-[51px] w-0.5 border-x border-[#2a2a2a] bg-[#222]" />
        <div className="ml-[5px] flex flex-col whitespace-nowrap pt-2">
          <span className="h-[25px] leading-[16px]">1 Object Selected</span>
          <span className="leading-[16px]">Click and drag to pan a non-camera view</span>
        </div>
        <div className="ml-auto flex flex-col">
          <div className="flex h-[30px] items-center">
            <SB label="Isolate" className="w-[27px]"><path d="M2 7V2H7M17 2H22V7M22 17V22H17M7 22H2V17" stroke={L} strokeWidth="2" /><path d="M7 6H17V17H7Z" fill={T} /></SB>
            <SB label="Lock selection" className="w-[27px]"><path d="M7 11V7C7 1 17 1 17 7V11" stroke={L} strokeWidth="2.600" /><path d="M4 10H20V23H4Z" fill={L} /><path d="M12 13V19" stroke="#333" strokeWidth="3" /></SB>
            <SB label="Absolute mode" className="w-[27px]"><path d="M2 2H22V22H2ZM12 2V6M12 18V22M2 12H6M18 12H22" stroke={L} strokeWidth="2" /><path d="M12 5L19 12L12 19L5 12Z" fill={L} /><circle cx="12" cy="12" r="2.800" fill="#333" /><path d="M4 4H8L4 8ZM20 4H16L20 8ZM4 20H8L4 16ZM20 20H16L20 16Z" fill={L} /></SB>
            <span className="w-0.5" />
            <Coord axis="X" value="536,304" />
            <Coord axis="Y" value="-74,301" />
            <Coord axis="Z" value="0,0" />
            <span className="ml-0.5 w-[108px]">Grid = 10,0</span>
          </div>
          <div className="flex h-[21px] items-center self-end">
            <VSep />
            <button aria-label="Adaptive degradation" className="ml-px flex h-[21px] w-[22px] items-center justify-center rounded-[3px] bg-[#5d89c3]"><Ico s={16}><path d="M12 1L22 6V18L12 23L2 18V6ZM2 6L12 11L22 6M12 11V23M7 3.500L17 8.500V20.500M17 3.500L7 8.500V20.500" stroke="#333" strokeWidth="3" /><path d="M12 1L22 6V18L12 23L2 18V6ZM2 6L12 11L22 6M12 11V23M7 3.500L17 8.500V20.500M17 3.500L7 8.500V20.500" stroke={L} strokeWidth="1.300" /></Ico></button>
            <button className="ml-[3px] w-[108px] text-left">Add Time Tag</button>
          </div>
        </div>
        <div className="w-[134px] shrink-0 pt-1">
          <div className="flex h-[22px] items-center">
            <SB label="Go to start"><path d="M3 4V20M22 6V18L14 12ZM13 6V18L5 12Z" fill={L} stroke={L} strokeWidth="1.200" /></SB>
            <VSep />
            <SB label="Previous key" className="w-[27px]"><path d="M10 4V20L1 12ZM13 4H16V20H13ZM19 4H22V20H19Z" fill={L} /></SB>
            <SB label="Play" fly className="w-[22px]"><path d="M3 1L21 12L3 23Z" fill={L} /></SB>
            <SB label="Next key" className="w-[23px]"><path d="M14 4V20L23 12ZM2 4H5V20H2ZM8 4H11V20H8Z" fill={L} /></SB>
            <VSep />
            <SB label="Go to end"><path d="M21 4V20M2 6V18L10 12ZM11 6V18L19 12Z" fill={L} stroke={L} strokeWidth="1.200" /></SB>
          </div>
          <div className="flex h-[22px] items-center">
            <SB label="Key mode"><path d="M10 6V18L3 12ZM14 6V18L21 12Z" fill={L} /></SB>
            <VSep />
            <span className="relative ml-px block h-[17px] w-[70px]">
              <input aria-label="Current frame" defaultValue="0" className="block h-[17px] w-[70px] border border-[#3c3c3c] bg-[#646464] pl-0.5 text-[#e0e0e0]" />
              <svg width="5" height="9" className="absolute right-1 top-1"><path d="M2.500 0L5 3H0ZM2.500 9L5 6H0Z" fill={L} /></svg>
            </span>
            <span className="w-px" /><VSep />
            <SB label="Time configuration"><circle cx="9" cy="9" r="8" fill={L} /><path d="M9 4V10H13" stroke="#444" strokeWidth="1.600" /><circle cx="17" cy="17" r="4.500" fill="#444" stroke={O} strokeWidth="3" /></SB>
          </div>
        </div>
        <div className="flex shrink-0 gap-1 pt-[5px]">
          <button aria-label="Set keys" className="flex h-[42px] w-[43px] items-center justify-center rounded-[3px] bg-[#646464]">
            <svg width="30" height="30" viewBox="0 0 30 30"><path d="M11 2H16V12H26V17H16V27H11V17H1V12H11Z" fill={L} /><path d="M17 24L27 15M23 18L26 21M25 16L28 19" stroke="#555" strokeWidth="4" /><circle cx="17" cy="24" r="3" fill="none" stroke="#555" strokeWidth="5" /><circle cx="17" cy="24" r="3" fill="none" stroke={T} strokeWidth="2" /><path d="M19 22L28 14M23 18L26 21M25 16L28 19" stroke={T} strokeWidth="1.800" /></svg>
          </button>
          <div className="flex w-[47px] flex-col gap-[3px]">
            <button className="h-5 whitespace-nowrap rounded-[3px] bg-[#646464] leading-5">Auto Key</button>
            <button className="h-[19px] whitespace-nowrap rounded-[3px] bg-[#646464] leading-[19px]">Set Key</button>
          </div>
          <div className="flex w-[115px] flex-col gap-[3px]">
            <Drop label="Key target" value="Selected" className="h-5 w-[115px]" />
            <div className="flex">
              <SB label="Tangents" fly className="w-[22px]"><path d="M4 23C9 17 8 8 4 5M20 23C15 17 16 8 20 5" stroke={T} strokeWidth="2.800" /><path d="M9.500 2.500H14.500V7.500H9.500Z" stroke={L} strokeWidth="1.500" /><circle cx="3" cy="4" r="2" fill={L} /><circle cx="21" cy="4" r="2" fill={L} /></SB>
              <button className="ml-1 h-5 flex-1 rounded-[3px] bg-[#646464] leading-5">Key Filters...</button>
            </div>
          </div>
        </div>
        <div className="ml-2 mr-2 grid shrink-0 grid-cols-[23px_25px_23px_23px] content-start gap-y-px pt-1">
          <SB label="Zoom" className="w-[21px]"><circle cx="15" cy="9" r="6.500" stroke={L} strokeWidth="2.500" /><path d="M10 14L2 22" stroke={L} strokeWidth="3.500" /></SB>
          <SB label="Zoom all" className="w-[21px]"><path d="M9 1H15V8H9ZM17 1H23V8H17ZM17 10H23V16H17Z" fill={T} /><circle cx="11" cy="12" r="5" stroke={L} strokeWidth="2.200" fill="#444" /><path d="M7 16L2 22" stroke={L} strokeWidth="3" /></SB>
          <SB label="Zoom extents" fly className="w-[21px]"><path d="M2 7V2H7M17 2H22V7M22 17V22H17M7 22H2V17" stroke={L} strokeWidth="2" /><path d="M12 4L20 8V16L12 20L4 16V8Z" fill={T} /><path d="M4 8L12 12L20 8M12 12V20" stroke="#2d5a5a" /></SB>
          <SB label="Zoom extents all" fly className="w-[21px]"><path d="M13 3L18 1L22 3V14L18 16L13 14Z" fill={T} /><path d="M13 3L18 5L22 3M18 5V16" stroke="#2d5a5a" /><path d="M1 15L6 11V19ZM8 10L12 13L8 16Z" fill={L} /><path d="M8 18L13 16L18 19L13 23Z" fill={L} /></SB>
          <SB label="Zoom region" className="w-[21px]"><rect x="2" y="2" width="20" height="18" stroke={L} strokeWidth="1.800" strokeDasharray="3 2" /><circle cx="13" cy="10" r="5" stroke={T} strokeWidth="2.200" fill="#444" /><path d="M9 14L2 22" stroke={T} strokeWidth="3" /></SB>
          <SB label="Pan" on fly className="w-[21px]"><path d="M7 13V5C7 3 9 3 9 5V3C9 1 12 1 12 3V2C12 0 15 0 15 3V5C15 3 18 3 18 5V16C18 21 16 23 13 23C9 23 8 21 6 18L2 12C1 10 4 10 5 11Z" fill={L} stroke="#333" strokeWidth="1.200" /><path d="M9.500 5V12M12 4V12M15 5V12" stroke="#333" /></SB>
          <SB label="Orbit" fly className="w-[21px]"><circle cx="11" cy="10" r="8" fill={L} /><path d="M11 2A8 8 0 0 0 3 10H11Z" fill={T} /><path d="M21 3C25 10 12 22 3 19" stroke="#444" strokeWidth="4.500" /><path d="M21 3C24 10 12 22 3 19" stroke={L} strokeWidth="2" /></SB>
          <SB label="Maximize viewport" className="w-[21px]"><path d="M1 1H23V23H1Z" fill={L} /><path d="M3 13H11V21H3Z" fill="#666" stroke="#333" strokeWidth="1.500" /><path d="M11 13L20 4M14 4H20V10" stroke="#333" strokeWidth="2.500" /></SB>
        </div>
      </div>
    </div>
  );
}

/* ---------- Taskbar ---------- */

function TaskApp({ label, children, state = "" }: Kids & { label: string; state?: "" | "open" | "active" }) {
  return (
    <button aria-label={label} className={"relative flex h-10 w-[49px] shrink-0 items-center justify-center " + (state === "active" ? "bg-[#333]" : "")}>
      {children}
      {state && <span className={"absolute bottom-0 h-0.5 bg-[#9ff0cc] " + (state === "active" ? "inset-x-0" : "inset-x-1")} />}
    </button>
  );
}

const Adobe = ({ t, className }: { t: string; className: string }) => (
  <span className={"flex h-[21px] w-[22px] items-center justify-center border font-['Open_Sans','Noto_Sans',sans-serif] text-[12px] font-semibold leading-none " + className}>{t}</span>
);

function Taskbar() {
  return (
    <footer className="flex h-10 shrink-0 items-center bg-black text-white">
      <TaskApp label="Start"><svg width="16" height="16" fill="#fff"><path d="M0 2.300L7 1.300V7.500H0ZM8 1.200L16 0V7.500H8ZM0 8.500H7V14.700L0 13.700ZM8 8.500H16V16L8 14.800Z" /></svg></TaskApp>
      <TaskApp label="Search"><svg width="20" height="18" fill="none" stroke="#fff" strokeWidth="1.500"><circle cx="10.500" cy="7" r="5.200" /><path d="M7 11L1 17" /></svg></TaskApp>
      <TaskApp label="Task view"><svg width="26" height="14" fill="none" stroke="#fff"><path d="M4.500 .5H15.500V13.500H4.500ZM3 2.500H.5V11.500H3M17 2.500H19.500V11.500H17" strokeWidth="1.200" /></svg></TaskApp>
      <TaskApp label="File Explorer"><svg width="23" height="20"><path d="M0 1H8L10 3H20V17H0Z" fill="#e8b23c" /><path d="M0 5H20V17H0Z" fill="#fbe08d" /><path d="M3 11H17V19H14V15H6V19H3Z" fill="#35b3e8" /></svg></TaskApp>
      <TaskApp label="Microsoft Store"><svg width="26" height="24"><path d="M8 6V4C8 0 16 0 16 4V6" fill="none" stroke="#fff" /><path d="M1 6H23L22 23H2Z" fill="#fff" /><path d="M6 9H11V14H6Z" fill="#f25022" /><path d="M12 9H17V14H12Z" fill="#7fba00" /><path d="M6 15H11V20H6Z" fill="#00a4ef" /><path d="M12 15H17V20H12Z" fill="#ffb900" /></svg></TaskApp>
      <TaskApp label="Spotify"><svg width="22" height="22" fill="none" stroke="#0a0a0a"><circle cx="11" cy="11" r="11" fill="#1ed760" stroke="none" /><path d="M4.500 7.500C9 6 14 6.500 18 8.800" strokeWidth="2.200" strokeLinecap="round" /><path d="M5 11.300C9 10 13 10.500 16.500 12.500" strokeWidth="1.900" strokeLinecap="round" /><path d="M5.500 14.800C9 13.800 12 14 15 15.800" strokeWidth="1.600" strokeLinecap="round" /></svg></TaskApp>
      <TaskApp label="Chrome" state="open"><svg width="22" height="22" viewBox="0 0 22 22"><circle cx="11" cy="11" r="11" fill="#fbc116" /><path d="M11 11L1.500 5.500A11 11 0 0 1 20.500 5.500H11Z" fill="#e33b2e" /><path d="M1.500 5.500A11 11 0 0 0 9.500 22L15 13.500H7Z" fill="#30a04c" /><circle cx="11" cy="11" r="5.200" fill="#fff" /><circle cx="11" cy="11" r="4.200" fill="#4286f5" /></svg></TaskApp>
      <TaskApp label="AutoCAD"><span className="flex h-6 w-6 items-center justify-center bg-[#fbe6e2] font-['Liberation_Sans'] text-[22px] font-bold leading-6 text-[#b82a2e]">A</span></TaskApp>
      <TaskApp label="Flight app"><svg width="24" height="24" fill="none"><circle cx="12" cy="12" r="11" fill="#3a3f47" stroke="#606570" /><path d="M6 8C7 10 9 7 10 9S13 8 14 9.500S16 8 18 9.500C18 12 15 13 13 18C13 14 14 12 15 11" stroke="#d8d8d8" strokeWidth="1.500" /></svg></TaskApp>
      <TaskApp label="Acrobat"><svg width="22" height="21" fill="none"><path d="M.5 .5H21.500V20.500H.5Z" fill="#2a0404" stroke="#e0160c" /><path d="M4 16C9 13 11 8 10 4.500C9 8 12 13 18 13C13 11.500 8 13 4 16Z" stroke="#fff" strokeWidth="1.300" /></svg></TaskApp>
      <TaskApp label="3ds Max" state="active">
        <span className="flex h-6 w-6 flex-col items-center bg-[#dff1f1] font-['Liberation_Sans'] font-bold text-[#158c92]">
          <span className="text-[20px] leading-[18px]">3</span>
          <span className="self-end pr-0.5 text-[5px] leading-[5px]">MAX</span>
        </span>
      </TaskApp>
      <TaskApp label="InDesign"><Adobe t="Id" className="border-[#f0318c] bg-[#2c0418] text-[#f0318c]" /></TaskApp>
      <TaskApp label="Photoshop"><Adobe t="Ps" className="border-[#00b4e6] bg-[#02202c] text-[#00b8ea]" /></TaskApp>
      <TaskApp label="Illustrator"><Adobe t="Ai" className="border-[#f07800] bg-[#2a1500] text-[#f57c00]" /></TaskApp>
      <TaskApp label="Harmony"><span className="relative flex h-6 w-6 rounded-[3px] bg-gradient-to-b from-[#4a86cc] to-[#2c5fa4] pl-[3px] font-['Liberation_Serif'] text-[12px] leading-[15px] text-[#dff08a]">H<svg width="12" height="12" viewBox="0 0 12 12" fill="none" stroke="#dff08a" strokeWidth="1.400" className="absolute bottom-px right-px"><path d="M2 4C2 1 8 .5 8 4C8 8 5 10 1 11" /><circle cx="2.800" cy="4.300" r="1" /><path d="M10 3V4.500M10 7V8.500" /></svg></span></TaskApp>
      <TaskApp label="GitHub Desktop" state="open"><svg width="24" height="24"><circle cx="12" cy="12" r="11" fill="#8a3aa4" stroke="#e8dcec" strokeWidth="1.500" /><path d="M6 7L9 8.500H15L18 7C19 10 19 15 16 17H8C5 15 5 10 6 7Z" fill="#fff" /></svg></TaskApp>
      <div className="ml-auto flex items-center">
        <button aria-label="Show hidden icons" className="w-6"><svg width="13" height="8" fill="none" stroke="#fff" strokeWidth="1.500" className="mx-auto"><path d="M1 7L6.500 1.500L12 7" /></svg></button>
        <button aria-label="Network" className="w-6"><svg width="14" height="14" fill="none" stroke="#ddd" className="mx-auto"><path d="M1 13C1 6 6 1 13 1M4 13C4 8 8 4 13 4M7 13C7 10 10 7 13 7" strokeWidth="1.300" /><circle cx="11.500" cy="11.500" r="1.500" fill="#fff" stroke="none" /></svg></button>
        <button aria-label="Battery" className="w-6"><svg width="16" height="12" fill="none" stroke="#fff" className="mx-auto"><path d="M5.500 3.500H14.500V10.500H3.500V7" /><path d="M7 5H13V9H7Z" fill="#fff" /><path d="M1.500 3H5.500V5L3.500 7L1.500 5ZM2.500 3V0M4.500 3V0M15.500 5V9" /></svg></button>
        <button aria-label="Volume" className="w-5"><svg width="15" height="12" fill="none" stroke="#fff" className="mx-auto"><path d="M1 4.500H3L6.500 1V11L3 7.500H1ZM9 4L14 9M14 4L9 9" strokeWidth="1.200" /></svg></button>
        <time className="w-[78px] text-center text-[12px] leading-[18px]">15:07<br />14/02/2018</time>
        <button aria-label="Notifications" className="mr-3 w-8"><svg width="18" height="17" fill="none" stroke="#fff" className="mx-auto"><path d="M1.500 1.500H16.500V12.500H11.500L9 15V12.500H1.500Z" strokeWidth="1.300" /></svg></button>
        <span className="mr-1 h-10 w-px bg-[#555]" />
      </div>
    </footer>
  );
}

export default function App() {
  return (
    <div className="flex h-screen min-h-[600px] flex-col overflow-hidden bg-[#444444] font-['Roboto','Noto_Sans',sans-serif]">
      <TitleBar />
      <MenuBar />
      <Toolbar />
      <div className="flex min-h-0 flex-1">
        <Explorer />
        <Viewport />
        <CommandPanel />
      </div>
      <StatusBar />
      <Taskbar />
    </div>
  );
}
